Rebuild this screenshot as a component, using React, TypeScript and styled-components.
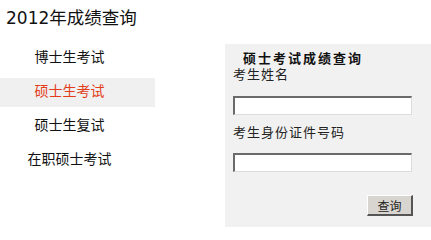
import React from 'react';
import styled, { createGlobalStyle } from 'styled-components';

const GlobalStyle = createGlobalStyle`
  html, body {
    margin: 0;
    padding: 0;
    background: #ffffff;
  }
  body {
    font-family: "Noto Sans CJK SC", "Noto Sans", sans-serif;
    color: #111;
  }
`;

const Page = styled.div`
  width: 431px;
  height: 228px;
  overflow: hidden;
`;

const PageTitle = styled.h1`
  margin: 0;
  padding: 5px 0 0 6px;
  height: 44px;
  box-sizing: border-box;
  font-size: 17px;
  font-weight: normal;
  line-height: 24px;
  color: #111;
  font-family: "DejaVu Sans", "Noto Sans CJK SC", sans-serif;

  span {
    font-family: "Noto Sans CJK SC", sans-serif;
    font-size: 17.5px;
  }
`;

const Body = styled.div`
  display: flex;
  align-items: flex-start;
  gap: 70px;
`;

const Nav = styled.ul`
  list-style: none;
  margin: 0;
  padding: 0;
  width: 155px;
  display: flex;
  flex-direction: column;
  gap: 5px;
`;

const NavItem = styled.li<{ $active?: boolean }>`
  height: 29px;
  box-sizing: border-box;
  padding: 0 16px 4px 0;
  line-height: 25px;
  text-align: center;
  font-size: 14px;
  background: ${({ $active }) => ($active ? '#f0f0f0' : 'transparent')};
  color: ${({ $active }) => ($active ? '#e23c18' : '#111')};
  cursor: pointer;
`;

const Panel = styled.form`
  flex: 1;
  height: 183px;
  box-sizing: border-box;
  background: #f1f1f1;
  padding: 7px 0 0 8px;
  display: flex;
  flex-direction: column;
`;

const PanelTitle = styled.div`
  padding-left: 10px;
  font-size: 13px;
  font-weight: bold;
  line-height: 14px;
  letter-spacing: 2px;
  color: #111;
`;

const Label = styled.label<{ $gap?: number }>`
  display: block;
  margin-top: ${({ $gap }) => $gap ?? 1}px;
  font-size: 13px;
  line-height: 16px;
  letter-spacing: 1px;
  color: #222;
`;

const TextInput = styled.input<{ $gap: number }>`
  display: block;
  margin: ${({ $gap }) => $gap}px 0 0 0;
  width: 179px;
  height: 19px;
  box-sizing: border-box;
  padding: 0 3px;
  background: #fff;
  border-style: solid;
  border-width: 2px 1px 1px 2px;
  border-color: #6a6a6a #dcdcdc #dcdcdc #6a6a6a;
  outline: none;
  font-size: 12px;
`;

const ButtonRow = styled.div`
  display: flex;
  justify-content: flex-end;
  width: 180px;
  margin-top: 23px;
`;

const QueryButton = styled.button`
  width: 46px;
  height: 21px;
  box-sizing: border-box;
  padding: 0;
  background: #d8d5d0;
  border-style: solid;
  border-width: 1px 2px 2px 1px;
  border-color: #ffffff #555555 #555555 #ffffff;
  font-family: "Noto Sans CJK SC", sans-serif;
  font-size: 12px;
  line-height: 17px;
  color: #222;
  cursor: pointer;
`;

const navItems = ['博士生考试', '硕士生考试', '硕士生复试', '在职硕士考试'];

export default function App() {
  return (
    <Page>
      <GlobalStyle />
      <PageTitle>
        2012<span>年成绩查询</span>
      </PageTitle>
      <Body>
        <Nav>
          {navItems.map((item, i) => (
            <NavItem key={item} $active={i === 1}>
              {item}
            </NavItem>
          ))}
        </Nav>
        <Panel onSubmit={(e) => e.preventDefault()}>
          <PanelTitle>硕士考试成绩查询</PanelTitle>
          <Label>考生姓名</Label>
          <TextInput type="text" $gap={14} />
          <Label $gap={9}>考生身份证件号码</Label>
          <TextInput type="text" $gap={13} />
          <ButtonRow>
            <QueryButton type="submit">查询</QueryButton>
          </ButtonRow>
        </Panel>
      </Body>
    </Page>
  );
}
